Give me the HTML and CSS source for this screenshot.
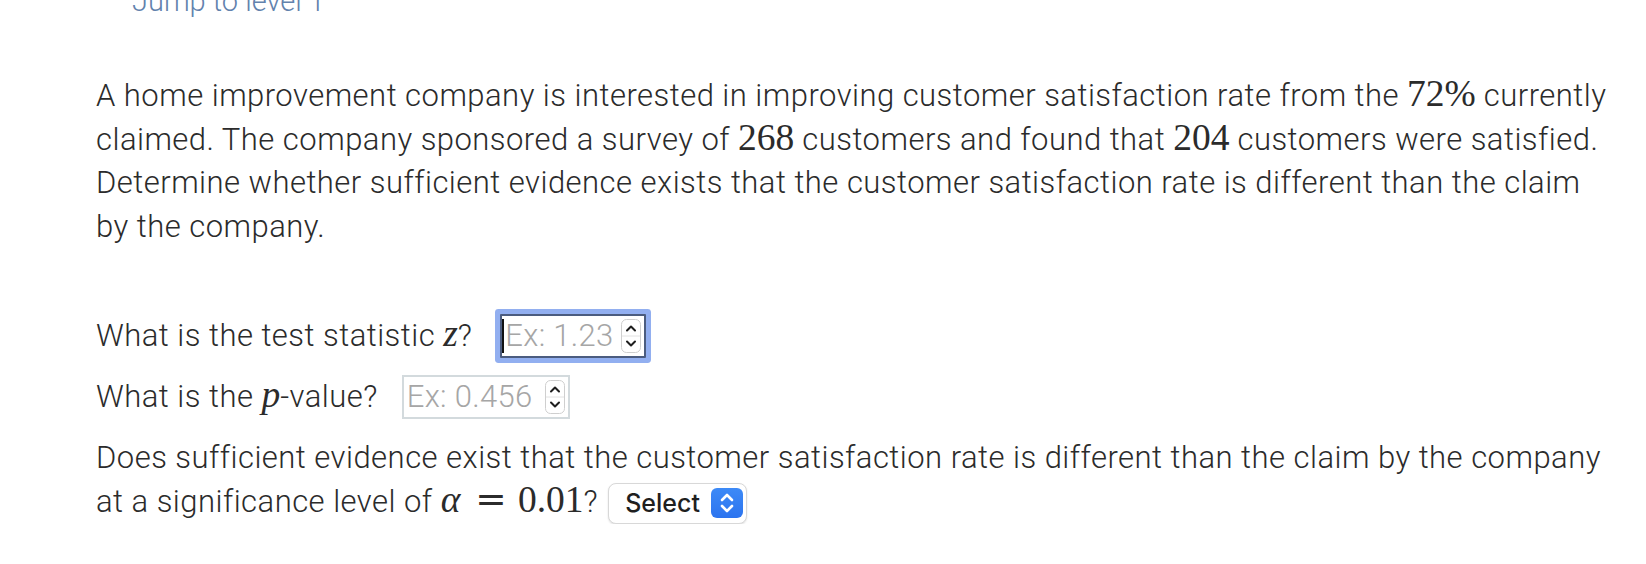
FILE: index.html
```html
<!DOCTYPE html>
<html lang="en">
<head>
<meta charset="utf-8">
<title>Hypothesis test question</title>
<link rel="stylesheet" href="styles.css">
</head>
<body>
<div class="page">
  <a class="jump" href="#">Jump to level 1</a>
  <p class="stem">A home improvement company is interested in improving customer satisfaction rate from the <span class="m">72%</span> currently claimed. The company sponsored a survey of <span class="m">268</span> customers and found that <span class="m">204</span> customers were satisfied. Determine whether sufficient evidence exists that the customer satisfaction rate is different than the claim by the company.</p>
  <div class="questions">
    <div class="q">
      <span class="q-text">What is the test statistic <span class="m mi">z</span>?</span>
      <span class="field field-focus field-sm">
        <span class="caret"></span>
        <input class="inp" type="text" placeholder="Ex: 1.23">
        <svg class="spin" viewBox="0 0 20 34" width="20" height="34"><rect x="0.5" y="0.5" width="19" height="33" rx="5" fill="#fff" stroke="#cfcfcf"/><line x1="1" y1="17" x2="19" y2="17" stroke="#e2e2e2"/><path d="M6 11.5 L10 7.5 L14 11.5" fill="none" stroke="#1e1e1e" stroke-width="2" stroke-linecap="round" stroke-linejoin="round"/><path d="M6 22.5 L10 26.5 L14 22.5" fill="none" stroke="#1e1e1e" stroke-width="2" stroke-linecap="round" stroke-linejoin="round"/></svg>
      </span>
    </div>
    <div class="q">
      <span class="q-text">What is the <span class="m mi">p</span>-value?</span>
      <span class="field field-md">
        <input class="inp" type="text" placeholder="Ex: 0.456">
        <svg class="spin" viewBox="0 0 20 34" width="20" height="34"><rect x="0.5" y="0.5" width="19" height="33" rx="5" fill="#fff" stroke="#cfcfcf"/><line x1="1" y1="17" x2="19" y2="17" stroke="#e2e2e2"/><path d="M6 11.5 L10 7.5 L14 11.5" fill="none" stroke="#1e1e1e" stroke-width="2" stroke-linecap="round" stroke-linejoin="round"/><path d="M6 22.5 L10 26.5 L14 22.5" fill="none" stroke="#1e1e1e" stroke-width="2" stroke-linecap="round" stroke-linejoin="round"/></svg>
      </span>
    </div>
    <p class="q-wrap">Does sufficient evidence exist that the customer satisfaction rate is different than the claim by the company at a significance level of <span class="m"><span class="mi alpha">α</span><span class="rel">=</span>0.01</span>? <span class="select"><span class="sel-label">Select</span><span class="sel-btn"><svg viewBox="0 0 32 30" width="32" height="30"><path d="M11 12 L16 7 L21 12" fill="none" stroke="#fff" stroke-width="2.6" stroke-linecap="round" stroke-linejoin="round"/><path d="M11 18 L16 23 L21 18" fill="none" stroke="#fff" stroke-width="2.6" stroke-linecap="round" stroke-linejoin="round"/></svg></span></span></p>
  </div>
</div>
</body>
</html>
```

FILE: styles.css
```css
html, body {
  margin: 0;
  padding: 0;
  background: #fff;
}

body {
  font-family: Roboto, "Liberation Sans", sans-serif;
  font-size: 31px;
  font-weight: 300;
  letter-spacing: 0.47px;
  line-height: 43.5px;
  color: #2b2b2b;
  overflow: hidden;
}

.page {
  padding: 0 36px 0 96px;
}

.jump {
  display: block;
  margin: -20px 0 0 36px;
  font-size: 29px;
  letter-spacing: 0;
  color: #6282ad;
  text-decoration: none;
}

.stem {
  margin: 50.5px 0 0;
}

.m {
  font-family: "Liberation Serif", "Times New Roman", serif;
  font-size: 1.21em;
  font-weight: 400;
  letter-spacing: 0;
  line-height: 1;
}

.mi {
  font-style: italic;
}

.alpha {
  margin-right: 0.1em;
}

.rel {
  font-family: "DejaVu Serif", "Liberation Serif", serif;
  margin: 0 0.3em;
}

.questions {
  margin-top: 65px;
}

.q {
  display: flex;
  align-items: center;
  height: 46px;
  margin-bottom: 15px;
}

.q-text {
  margin-right: 24px;
}

.field {
  display: inline-flex;
  align-items: center;
  box-sizing: border-box;
  height: 44px;
  border: 2px solid #d3dadd;
  padding: 0 3px 0 3px;
  background: #fff;
}

.field-focus {
  border-color: #4b5c7f;
  border-radius: 1px;
  box-shadow: 0 0 0 5px #92aff0;
  padding-left: 0;
  margin-left: 4px;
}

.field-sm {
  width: 146px;
}

.field-md {
  width: 168px;
}

.caret {
  width: 2px;
  height: 34px;
  background: #111;
  margin-right: 1px;
  flex: none;
}

.inp {
  flex: 1;
  min-width: 0;
  border: 0;
  outline: 0;
  padding: 0;
  margin: 0;
  background: transparent;
  font: inherit;
  letter-spacing: 0.3px;
  color: #333;
}

.inp::placeholder {
  color: #a6a6a6;
}

.spin {
  flex: none;
  display: block;
}

.q-wrap {
  margin: 16px 0 0;
}

.select {
  display: inline-flex;
  align-items: center;
  box-sizing: border-box;
  height: 41px;
  vertical-align: middle;
  margin-left: 2px;
  padding: 0 3px 0 16px;
  border: 1px solid #d8d8d8;
  border-radius: 8px;
  box-shadow: 0 1px 2px rgba(0, 0, 0, 0.12);
  background: #fff;
  font-family: Inter, "Liberation Sans", sans-serif;
  font-size: 25px;
  font-weight: 500;
  letter-spacing: 0;
  color: #1f1f1f;
  line-height: 1;
}

.sel-label {
  margin-right: 11px;
}

.sel-btn {
  display: block;
  width: 32px;
  height: 30px;
  border-radius: 6px;
  background: linear-gradient(#3d8af7, #2c74ef);
}

.sel-btn svg {
  display: block;
}
```
